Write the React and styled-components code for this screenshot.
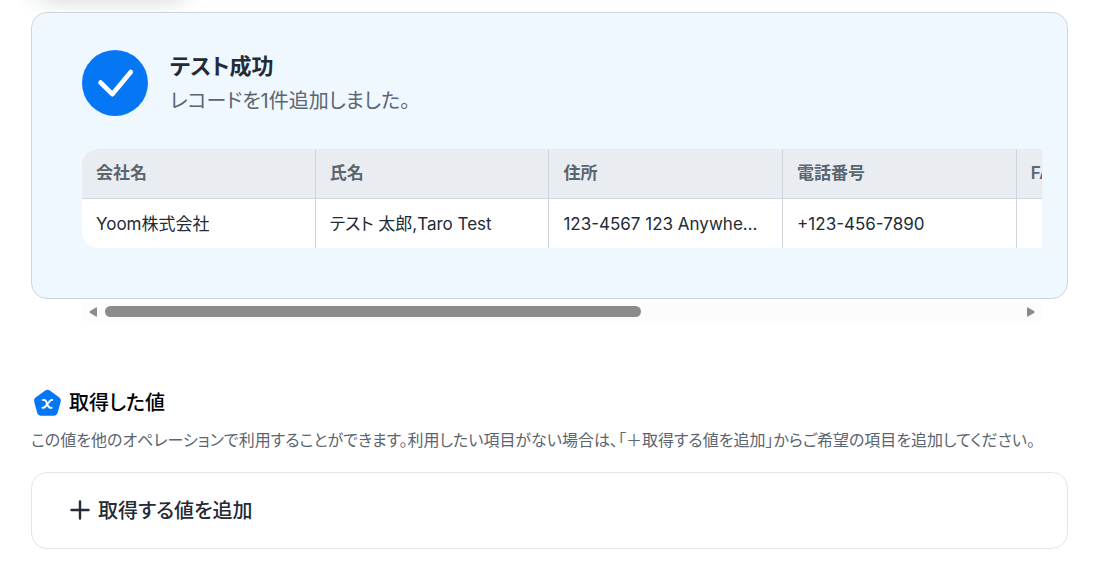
import { useEffect, useRef, useState } from "react";
import styled, { createGlobalStyle } from "styled-components";

const GlobalStyle = createGlobalStyle`
  * {
    box-sizing: border-box;
  }
  body {
    margin: 0;
    background: #fff;
    color: #222b36;
    font-family: Inter, "Noto Sans CJK JP", sans-serif;
    font-feature-settings: "palt";
  }
`;

const Page = styled.main`
  position: relative;
  padding: 12px 36px 16px 31px;
  overflow: hidden;
`;
const TopButton = styled.div`
  position: absolute;
  top: -46px;
  left: 36px;
  width: 150px;
  height: 40px;
  border-radius: 16px;
  box-shadow: 0 4px 24px rgba(34, 54, 64, 0.26);
`;
const Panel = styled.section`
  position: relative;
  padding: 37px 25px 50px 50px;
  border: 1px solid #ced5df;
  border-radius: 16px;
  background: #eff7ff;
`;
const Result = styled.header`
  display: flex;
  gap: 22px;
  margin-bottom: 33px;
`;
const CheckIcon = styled.svg`
  flex: none;
  width: 66px;
  height: 66px;
`;
const ResultTitle = styled.h1`
  margin: 0;
  font-size: 22px;
  font-weight: 600;
  line-height: 32px;
`;
const ResultText = styled.p`
  margin: 4px 0 0;
  color: #5b6570;
  font-size: 20px;
  line-height: 30px;
`;
const Scroller = styled.div`
  overflow: hidden;
  border-radius: 16px 0 0 16px;
`;
const Table = styled.table`
  width: 1636px;
  table-layout: fixed;
  border-collapse: separate;
  border-spacing: 0;
  background: #fff;
  font-size: 17px;
  line-height: 24px;
`;
const Th = styled.th`
  height: 50px;
  padding: 0 20px 2px 14px;
  border-bottom: 1px solid #ced5dd;
  border-right: 1px solid #ced5dd;
  background: #e9edf1;
  color: #5b6570;
  font-weight: 600;
  text-align: left;
`;
const Td = styled.td`
  height: 49px;
  padding: 0 20px 0 14px;
  border-right: 1px solid #ced5dd;
  overflow: hidden;
  text-overflow: ellipsis;
  white-space: nowrap;
`;
const Scrollbar = styled.div`
  display: flex;
  align-items: center;
  gap: 8px;
  height: 19px;
  margin: 3px 26px 0 51px;
  padding: 0 7px;
  background: #fcfcfc;
`;
const ArrowButton = styled.button`
  display: flex;
  padding: 0;
  border: 0;
  background: none;
  svg {
    width: 8px;
    height: 10px;
    fill: #8b8b8b;
  }
`;
const Track = styled.div`
  flex: 1;
`;
const Thumb = styled.div`
  height: 11px;
  border-radius: 6px;
  background: #8b8b8b;
`;
const Values = styled.section`
  margin-top: 64px;
`;
const ValuesTitle = styled.h2`
  display: flex;
  align-items: center;
  gap: 6px;
  margin: 0;
  color: #000;
  font-size: 20px;
  font-weight: 500;
  line-height: 36px;
`;
const BadgeIcon = styled.svg`
  width: 32px;
  height: 32px;
`;
const ValuesText = styled.p`
  margin: 8px 0 20px;
  color: #5b6570;
  font-size: 16px;
  line-height: 23px;
`;
const AddButton = styled.button`
  display: flex;
  align-items: center;
  gap: 8px;
  width: 100%;
  height: 77px;
  padding: 0 38px 2px;
  border: 1px solid #e3e5e7;
  border-radius: 16px;
  background: #fff;
  color: #222b36;
  font: inherit;
  font-feature-settings: inherit;
  font-size: 20px;
  font-weight: 500;
  svg {
    width: 20px;
    height: 20px;
  }
`;

const columns = ["会社名", "氏名", "住所", "電話番号", "FAX", "", ""];
const record = ["Yoom株式会社", "テスト 太郎,Taro Test", "123-4567 123 Anywhere St.", "+123-456-7890", "", "", ""];

export default function App() {
  const scroller = useRef(null);
  const [view, setView] = useState({ left: 0, size: 58 });

  function measure() {
    const el = scroller.current;
    setView({
      left: (el.scrollLeft / el.scrollWidth) * 100,
      size: (el.clientWidth / el.scrollWidth) * 100,
    });
  }

  useEffect(() => {
    measure();
    window.addEventListener("resize", measure);
    return () => window.removeEventListener("resize", measure);
  }, []);

  function scroll(step) {
    scroller.current.scrollBy({ left: step, behavior: "smooth" });
  }

  return (
    <Page>
      <GlobalStyle />
      <TopButton />
      <Panel>
        <Result>
          <CheckIcon viewBox="0 0 66 66" aria-hidden="true">
            <circle cx="33" cy="33" r="33" fill="#0577f5" />
            <path d="M18.5 32.5 30.3 44.2 48.8 22" fill="none" stroke="#fff" strokeWidth="4.6" strokeLinecap="round" strokeLinejoin="round" />
          </CheckIcon>
          <div>
            <ResultTitle>テスト成功</ResultTitle>
            <ResultText>レコードを1件追加しました。</ResultText>
          </div>
        </Result>
        <Scroller ref={scroller} onScroll={measure}>
          <Table>
            <thead>
              <tr>{columns.map((name, i) => <Th key={i}>{name}</Th>)}</tr>
            </thead>
            <tbody>
              <tr>{record.map((value, i) => <Td key={i}>{value}</Td>)}</tr>
            </tbody>
          </Table>
        </Scroller>
      </Panel>
      <Scrollbar>
        <ArrowButton type="button" aria-label="左へ" onClick={() => scroll(-234)}>
          <svg viewBox="0 0 8 10"><path d="M8 1v8q0 1-1 .6L1 6Q0 5 1 4L7 .4Q8 0 8 1z" /></svg>
        </ArrowButton>
        <Track>
          <Thumb style={{ width: `${view.size}%`, marginLeft: `${view.left}%` }} />
        </Track>
        <ArrowButton type="button" aria-label="右へ" onClick={() => scroll(234)}>
          <svg viewBox="0 0 8 10"><path d="M0 1v8q0 1 1 .6L7 6Q8 5 7 4L1 .4Q0 0 0 1z" /></svg>
        </ArrowButton>
      </Scrollbar>
      <Values>
        <ValuesTitle>
          <BadgeIcon viewBox="0 0 32 32" aria-hidden="true">
            <path d="M14.2 3.6q2.3-1.6 4.6 0l9.5 6.9q2.2 1.6 1.4 4.2l-3.2 11.6q-.8 2.4-3.4 2.4H9.7q-2.6 0-3.4-2.4L3.2 14.7q-.8-2.6 1.4-4.2z" fill="#0577f5" />
            <path d="M12 13.1h1.2q1.3 0 2 1.500l2.2 4.600q.7 1.500 2 1.500h1.200M21.200 13.100q-1.500-.2-2.600 1.200l-4.200 5.200q-1.200 1.400-2.900 1.200" fill="none" stroke="#fff" strokeWidth="2" strokeLinecap="round" />
          </BadgeIcon>
          取得した値
        </ValuesTitle>
        <ValuesText>
          この値を他のオペレーションで利用することができます。利用したい項目がない場合は、「＋取得する値を追加」からご希望の項目を追加してください。
        </ValuesText>
        <AddButton type="button">
          <svg viewBox="0 0 20 20" aria-hidden="true">
            <path d="M10 1.5v17M1.5 10h17" stroke="#222b36" strokeWidth="2.4" strokeLinecap="round" />
          </svg>
          取得する値を追加
        </AddButton>
      </Values>
    </Page>
  );
}
